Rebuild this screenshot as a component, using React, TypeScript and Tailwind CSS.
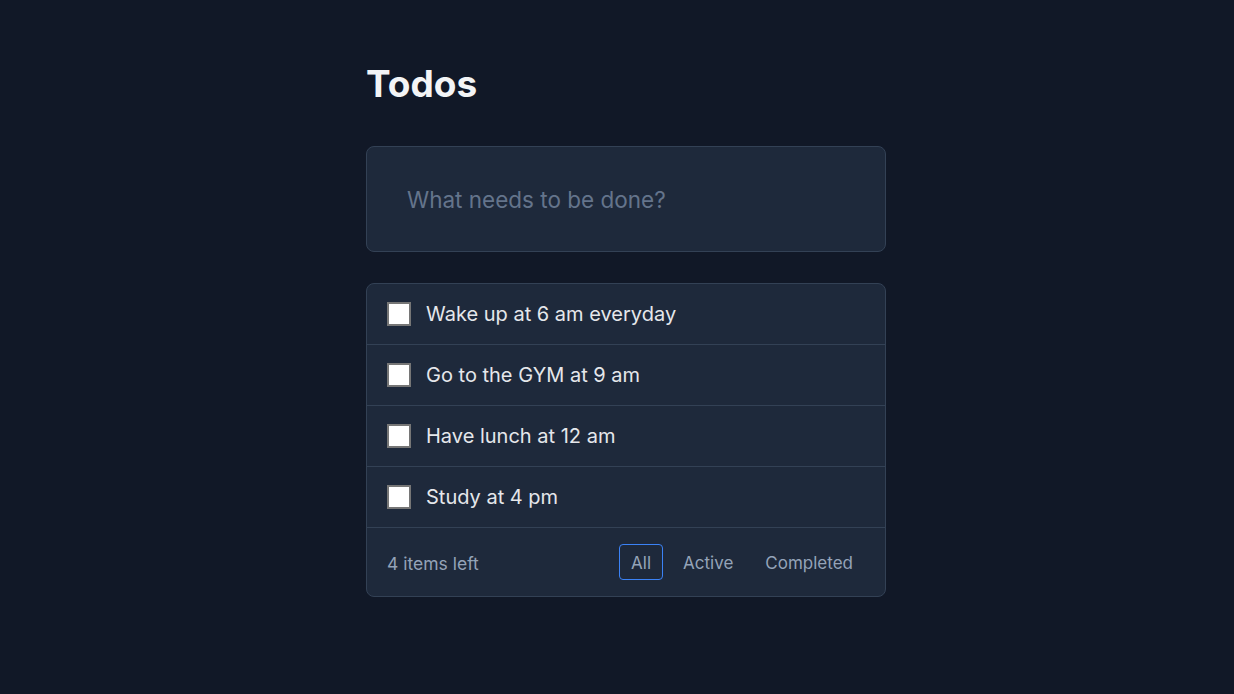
import React, { useState } from "react";

type Todo = { id: number; text: string; done: boolean };

const initialTodos: Todo[] = [
  { id: 1, text: "Wake up at 6 am everyday", done: false },
  { id: 2, text: "Go to the GYM at 9 am", done: false },
  { id: 3, text: "Have lunch at 12 am", done: false },
  { id: 4, text: "Study at 4 pm", done: false },
];

export default function App() {
  const [todos, setTodos] = useState<Todo[]>(initialTodos);
  const [filter, setFilter] = useState<"All" | "Active" | "Completed">("All");
  const [text, setText] = useState("");

  const toggle = (id: number) =>
    setTodos(todos.map((t) => (t.id === id ? { ...t, done: !t.done } : t)));

  const left = todos.filter((t) => !t.done).length;

  return (
    <div
      className="min-h-screen w-full bg-[#111827] pt-[56px]"
      style={{ fontFamily: "Inter, 'Noto Sans', sans-serif" }}
    >
      <div className="ml-[366px] w-[520px]">
        <h1 className="text-[37px] leading-[56px] font-bold text-[#f3f4f6]">
          Todos
        </h1>
        <input
          value={text}
          onChange={(e) => setText(e.target.value)}
          placeholder="What needs to be done?"
          className="mt-[34px] block w-full h-[106px] px-10 pt-[1px] rounded-lg border border-[#334155] bg-[#1e293b] text-[22.5px] text-gray-200 placeholder:text-[#64748b] outline-none"
        />
        <div className="mt-[31px] rounded-lg border border-[#334155] bg-[#1e293b] overflow-hidden">
          {todos
            .filter((t) =>
              filter === "All" ? true : filter === "Active" ? !t.done : t.done
            )
            .map((t) => (
              <label
                key={t.id}
                className="flex items-center gap-[15px] h-[61px] px-5 border-b border-[#334155] cursor-pointer"
              >
                <span
                  onClick={() => toggle(t.id)}
                  className="w-6 h-6 shrink-0 bg-white border-2 border-[#767676] flex items-center justify-center text-[#1e293b] text-sm"
                >
                  {t.done ? "✓" : ""}
                </span>
                <span className="text-xl leading-7 text-[#e5e7eb]">
                  {t.text}
                </span>
              </label>
            ))}
          <div className="flex items-center justify-between h-[68px] pl-5 pr-5">
            <span className="text-[17.5px] pt-[4px] text-[#94a3b8]">
              {left} items left
            </span>
            <div className="flex items-center gap-2">
              {(["All", "Active", "Completed"] as const).map((f) => (
                <button
                  key={f}
                  onClick={() => setFilter(f)}
                  className={
                    "h-9 px-[11px] pt-[3px] rounded-[4px] text-[17px] text-[#94a3b8] border " +
                    (filter === f ? "border-[#3b82f6]" : "border-transparent")
                  }
                >
                  {f}
                </button>
              ))}
            </div>
          </div>
        </div>
      </div>
    </div>
  );
}
